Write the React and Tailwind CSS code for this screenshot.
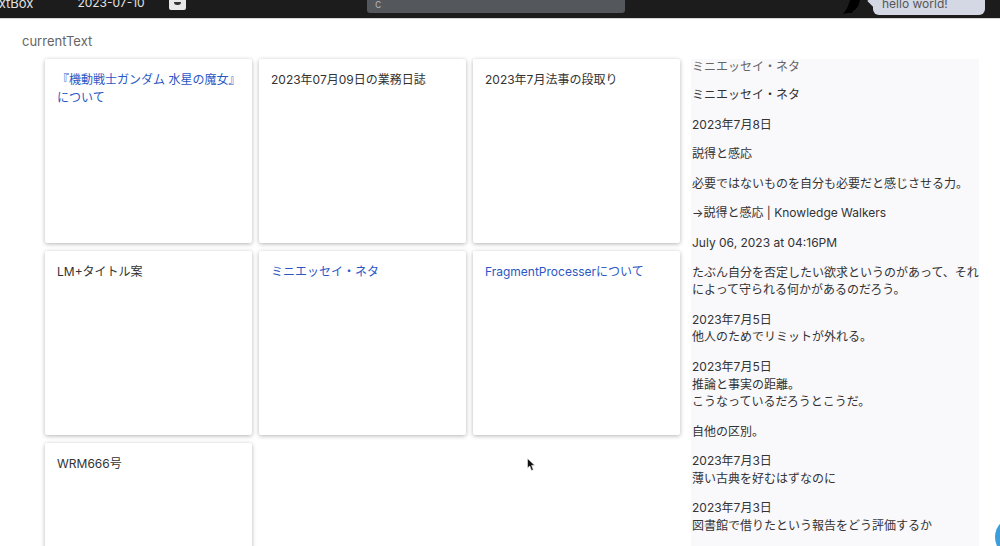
const font = "font-['Inter','Noto_Sans_CJK_JP',sans-serif]";

const cards = [
  { title: '『機動戦士ガンダム 水星の魔女』について', link: true },
  { title: '2023年07月09日の業務日誌' },
  { title: '2023年7月法事の段取り' },
  { title: 'LM+タイトル案' },
  { title: 'ミニエッセイ・ネタ', link: true },
  { title: 'FragmentProcesserについて', link: true },
  { title: 'WRM666号' },
];

const notes = [
  ['ミニエッセイ・ネタ'],
  ['2023年7月8日'],
  ['説得と感応'],
  ['必要ではないものを自分も必要だと感じさせる力。'],
  ['→説得と感応 | Knowledge Walkers'],
  ['July 06, 2023 at 04:16PM'],
  ['たぶん自分を否定したい欲求というのがあって、それによって守られる何かがあるのだろう。'],
  ['2023年7月5日', '他人のためでリミットが外れる。'],
  ['2023年7月5日', '推論と事実の距離。', 'こうなっているだろうとこうだ。'],
  ['自他の区別。'],
  ['2023年7月3日', '薄い古典を好むはずなのに'],
  ['2023年7月3日', '図書館で借りたという報告をどう評価するか'],
];

function Header() {
  return (
    <header className="relative h-[19px] shrink-0 overflow-hidden border-b border-[#d5d5d5] bg-[#1c1c1c] text-xs text-[#e2e2e2]">
      <div className="flex h-[18px] items-start">
        <div className="-mt-[5px] flex h-[16px] w-[367px] shrink-0 items-center">
          <span className="-ml-[16px] text-[13px] leading-4">TextBox</span>
          <span className="ml-[44px] text-xs leading-4">2023-07-10</span>
          <div className="ml-[24px] mt-[-3px] flex h-[16px] w-[17px] items-end justify-center rounded-[2px] bg-[#e8e8e8] pb-[5px]">
            <div className="h-[3px] w-[7px] rounded-b-full bg-[#333]" />
          </div>
        </div>
        <div className="-mt-1 flex h-[17px] w-[258px] items-center rounded-[3px] bg-[#54575c] px-2 text-[11px] text-[#aaa]">c</div>
        <div className="ml-auto flex items-start">
          <svg width="20" height="14" viewBox="0 0 20 14" className="mr-[11px]">
            <path d="M18 0 C17 5 15 9 11 11 L10 13 L6 13 L1 14 L4 10 C6 7 7 3 8 0 Z" fill="#000" />
          </svg>
          <div className="relative -mt-2 mr-[15px] flex h-[23px] w-[112px] items-center rounded-[6px] bg-[#d3d8e4] pl-[9px] text-[12px] text-[#555]">
            hello world!
            <span className="absolute -left-1 top-[5px] h-2 w-2 rotate-45 bg-[#d3d8e4]" />
          </div>
        </div>
      </div>
    </header>
  );
}

function Card({ title, link }) {
  return (
    <div className={`h-[184px] rounded-[2px] bg-white px-3 pt-3 text-xs leading-[17.6px] shadow-[0_1px_4px_rgba(0,0,0,0.3)] ${link ? 'text-[#2b57c4]' : 'text-[#333]'}`}>
      {title}
    </div>
  );
}

export default function App() {
  return (
    <div className={`relative flex h-[546px] w-[1000px] flex-col overflow-hidden bg-white ${font}`}>
      <Header />
      <div className="ml-[22px] mt-[13px] h-[27px] text-[13px] leading-[18px] text-[#666]">currentText</div>
      <div className="flex min-h-0 flex-1 items-stretch pl-[45px]">
        <div className="grid h-[600px] w-[635px] shrink-0 grid-cols-[207px_207px_207px] content-start gap-x-[7px] gap-y-2">
          {cards.map((card) => (
            <Card key={card.title} {...card} />
          ))}
        </div>
        <div className="ml-[11px] w-[288px] overflow-hidden bg-[#f9f8fb] pl-px text-xs leading-[17.6px] text-[#333]">
          <div className="-mt-px text-[#666]">ミニエッセイ・ネタ</div>
          <div className="mt-[10.4px] flex flex-col gap-3">
            {notes.map((lines, i) => (
              <p key={i}>
                {lines.map((line) => (
                  <span key={line} className="block">{line}</span>
                ))}
              </p>
            ))}
          </div>
        </div>
      </div>
      {/* cursor */}
      <svg width="9" height="14" viewBox="0 0 9 14" className="absolute left-[527px] top-[458px]">
        <path d="M0.5 0.5 L0.5 10 L2.8 8 L4.5 12.5 L6.3 11.7 L4.6 7.4 L7.6 7.2 Z" fill="#111" stroke="#fff" strokeWidth="0.5" />
      </svg>
      {/* help button peeking in */}
      <div className="absolute left-[995px] top-[517px] h-10 w-10 rounded-full bg-[#3b9fdc]" />
    </div>
  );
}
